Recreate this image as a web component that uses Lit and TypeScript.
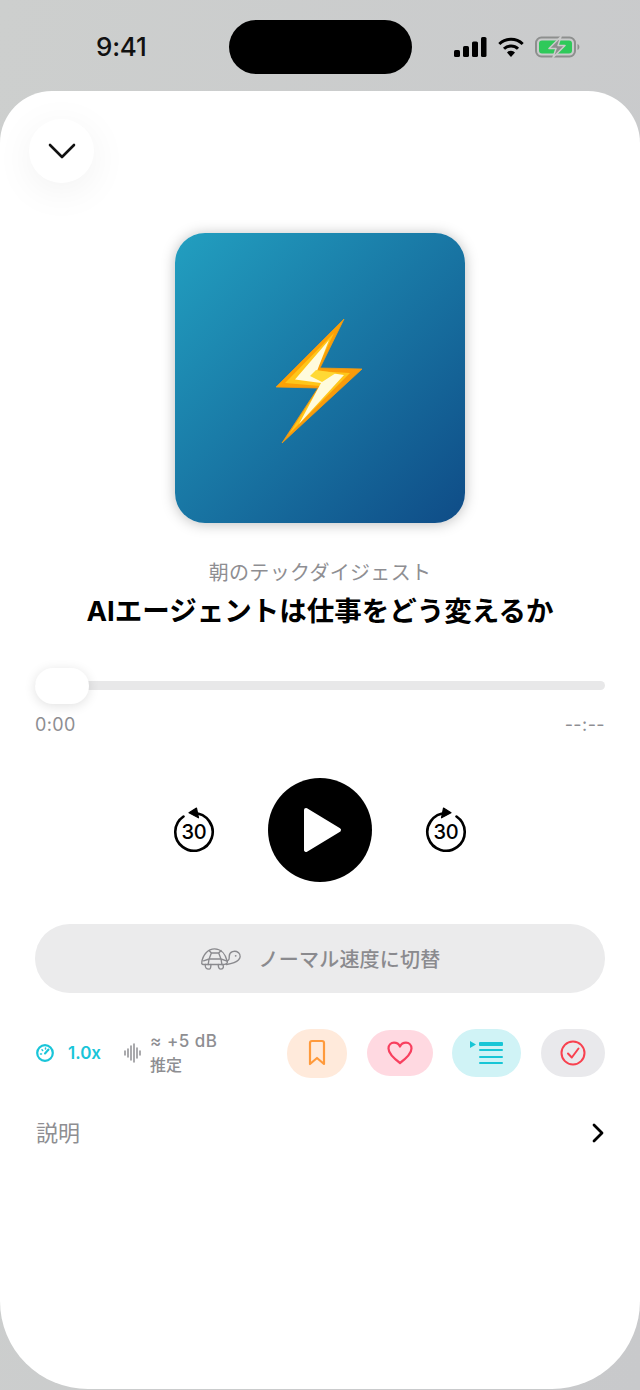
import { LitElement, html, css, svg } from "lit";
import { customElement } from "lit/decorators.js";

const replay = (flip: boolean) => html`<div class="skip">
  <svg width="42" height="46" viewBox="0 0 42 46" fill="none" class=${flip ? "flip" : ""}>
    <path d="M10.500 9.500 A 18.700 18.700 0 1 0 21 6.300" stroke="#000" stroke-width="2.600" stroke-linecap="round"/>
    <path d="M23.500 1 L16 5.800 L25.500 10.800 Z" fill="#000" stroke="#000" stroke-width="1.200" stroke-linejoin="round"/>
  </svg>
  <span>30</span>
</div>`;

@customElement("app-root")
export class AppRoot extends LitElement {
  static styles = css`
    :host { display: block; width: 640px; height: 1390px; overflow: hidden; background: linear-gradient(100deg, #cdcfce, #c8c9cb); font-family: Inter, "Noto Sans CJK JP", sans-serif; }
    .status { height: 91px; padding-top: 20px; box-sizing: border-box; display: grid; grid-template-columns: 229px 183px 1fr; }
    .time { font: 500 26px/54px Inter, sans-serif; color: #111; padding-left: 96px; letter-spacing: -0.2px; }
    .island { width: 183px; height: 54px; background: #000; border-radius: 27px; }
    .sys { display: flex; align-items: center; gap: 10px; padding-left: 41px; height: 54px; }
    .sheet { position: relative; overflow: hidden; height: 1298px; background: #fff; border-radius: 52px 52px 88px 88px; display: flex; flex-direction: column; align-items: center; }
    .close { position: absolute; left: 29px; top: 28px; width: 65px; height: 64px; border-radius: 50%; background: #fff; box-shadow: 0 8px 40px rgba(0,0,0,.06); display: flex; align-items: center; justify-content: center; }
    .art { margin-top: 142px; width: 290px; height: 290px; border-radius: 30px; background: linear-gradient(135deg, #229fc0, #0f4c87); box-shadow: 0 1px 14px rgba(0,0,0,.26); display: flex; align-items: center; justify-content: center; }
    .bolt { filter: blur(.4px); }
    .show { margin-top: 37px; font-size: 20px; line-height: 27px; color: #8e8e92; letter-spacing: 0.3px; }
    .title { margin-top: 7px; font-size: 27.500px; line-height: 34px; font-weight: 700; color: #000; }
    .progress { position: relative; margin-top: 53px; width: 570px; height: 9px; border-radius: 5px; background: #e8e8e9; }
    .thumb { position: absolute; left: 0; top: -13px; width: 54px; height: 36px; border-radius: 18px; background: #fff; box-shadow: 0 2px 12px rgba(0,0,0,.12); }
    .times { width: 570px; margin-top: 24px; display: flex; justify-content: space-between; font-size: 18px; line-height: 22px; color: #8e8e92; letter-spacing: .4px; }
    .controls { margin-top: 42px; display: flex; align-items: center; gap: 53px; }
    .skip { position: relative; width: 42px; height: 46px; }
    .skip svg { display: block; }
    .flip { transform: scaleX(-1); }
    .skip span { position: absolute; left: 0; right: 0; top: 9px; text-align: center; font-size: 20px; line-height: 32px; font-weight: 500; color: #000; letter-spacing: -0.3px; }
    .play { width: 104px; height: 104px; border-radius: 50%; background: #000; display: flex; align-items: center; justify-content: center; }
    .glyph { margin-left: 6px; }
    .normal { margin-top: 42px; width: 570px; height: 69px; border-radius: 35px; background: #ebebec; display: flex; align-items: center; justify-content: center; gap: 17px; font-size: 20px; font-weight: 500; color: #8a8a8e; letter-spacing: .2px; }
    .meta { margin-top: 35px; width: 570px; height: 50px; display: flex; align-items: center; }
    .speed { display: flex; align-items: center; gap: 13px; color: #19c5d9; font-size: 17px; font-weight: 600; width: 89px; }
    .db { display: flex; align-items: center; gap: 8px; width: 163px; color: #8e8e92; font-size: 16px; line-height: 24px; font-weight: 500; }
    .db b { font-size: 17px; font-weight: 500; letter-spacing: .5px; }
    .pills { flex: 1; display: flex; align-items: center; justify-content: space-between; }
    .pill { height: 48px; border-radius: 24px; display: flex; align-items: center; justify-content: center; }
    .orange { width: 60px; height: 49px; background: #ffeadb; }
    .pink { width: 66px; background: #ffd9e1; height: 46px; }
    .teal { width: 69px; background: #d0f3f6; }
    .grey { width: 64px; background: #e9e9ec; }
    .desc { margin-top: 39px; width: 570px; height: 32px; display: flex; align-items: center; justify-content: space-between; font-size: 22px; color: #8e8e92; }
    .desc span { margin: -4px 0 0 1px; }
  `;

  render() {
    return html`
      <div class="status">
        <div class="time">9:41</div>
        <div class="island"></div>
        <div class="sys">
          <svg width="34" height="22" viewBox="0 0 34 22" fill="#000">
            <rect x="1" y="14" width="6" height="7" rx="1.600"/><rect x="10" y="10" width="6" height="11" rx="1.600"/><rect x="19" y="5.500" width="6" height="15.500" rx="1.600"/><rect x="28" y="1" width="5.500" height="20" rx="1.600"/>
          </svg>
          <svg width="28" height="22" viewBox="0 0 27 22" fill="none" stroke="#000" stroke-width="3">
            <path d="M1.800 8 A 17 17 0 0 1 25.200 8"/><path d="M6.500 12.800 A 10 10 0 0 1 20.500 12.800"/><path d="M13.500 21 L9.500 16.500 A 5.500 5.500 0 0 1 17.500 16.500 Z" fill="#000" stroke="none"/>
          </svg>
          <svg width="46" height="22" viewBox="0 0 46 22" fill="none">
            <rect x="1" y="1.500" width="39" height="19" rx="5.500" stroke="#8d8f8e" stroke-width="2"/>
            <rect x="4" y="4.500" width="33" height="13" rx="3" fill="#2fc95a"/>
            <path d="M42.500 8 C45 9 45 13 42.500 14 Z" fill="#8d8f8e"/>
            <path d="M26 0.500 L14 12.500 H21 L18 21.500 L30 9.500 H23 Z" fill="#8d8f8e" stroke="#cbcccc" stroke-width="1.500" stroke-linejoin="round"/>
          </svg>
        </div>
      </div>
      <div class="sheet">
        <div class="close">
          <svg width="30" height="18" viewBox="0 0 30 18" fill="none"><path d="M3 3 L15 15 L27 3" stroke="#111" stroke-width="2.600" stroke-linecap="round" stroke-linejoin="round"/></svg>
        </div>
        <div class="art">
          <svg class="bolt" width="92" height="132" viewBox="0 0 92 132">
            <defs>
              <linearGradient id="b" x1="0" y1="0" x2="1" y2="1"><stop offset="0" stop-color="#ffa800"/><stop offset="1" stop-color="#f59410"/></linearGradient>
            </defs>
            <path d="M70 7 L46 56 L88 57 L8 131 L44 76 L2 75 Z" fill="url(#b)" stroke="#f59a10" stroke-width="0.800" stroke-linejoin="round"/>
            <path d="M60 21 L42 59 L76 61 L15 122 L46 74 L11 71 Z" fill="#ffc61a"/>
            <path d="M55 28 L43 59 L70 63 L25 112 L47 71 L21 67.500 Z" fill="#fffbdc"/>
            <path d="M42 58 L62 61 L48 70 L36 64 Z" fill="#ffd934"/>
          </svg>
        </div>
        <div class="show">朝のテックダイジェスト</div>
        <div class="title">AIエージェントは仕事をどう変えるか</div>
        <div class="progress"><div class="thumb"></div></div>
        <div class="times"><span>0:00</span><span>--:--</span></div>
        <div class="controls">
          ${replay(false)}
          <div class="play">
            <svg class="glyph" width="40" height="46" viewBox="0 0 40 46"><path d="M3 3 L36 23 L3 43 Z" fill="#fff" stroke="#fff" stroke-width="4" stroke-linejoin="round"/></svg>
          </div>
          ${replay(true)}
        </div>
        <div class="normal">
          <svg width="42" height="22" viewBox="0 0 44 24" fill="none" stroke="#8a8a8e" stroke-width="1.500" stroke-linejoin="round" stroke-linecap="round">
            <path d="M1 16 C2 7 8 1 15 1 C22 1 27 7 29 15 C29 18 26 18 24 18 H5 C2 18 0.500 18 1 16 Z"/>
            <path d="M9 12 L11.500 5.500 H19.500 L22 12 Z M11.500 5.500 L9 2.800 M19.500 5.500 L22 2.800 M9 12 L3 14 M22 12 L28 14 M9 12 L8 18 M22 12 L23 18"/>
            <path d="M5 18 C4 21 6 23 9 23 C11 23 11 20 11 18 M19 18 C19 21 20 23 22 23 C25 23 25 20 24 18"/>
            <path d="M28 14 C31 14 31 12 31 9 C31 4 37 2 41 5 C44 8 43 11 41 13 C38 16 33 17 28 18"/>
            <circle cx="38" cy="8.500" r="1" fill="#8a8a8e" stroke="none"/>
          </svg>
          <span>ノーマル速度に切替</span>
        </div>
        <div class="meta">
          <div class="speed">
            <svg width="20" height="20" viewBox="0 0 20 20" fill="none" stroke="#19c5d9">
              <circle cx="10" cy="10" r="7.800" stroke-width="2.200"/>
              <path d="M10 10.500 L13.500 6.500" stroke-width="2" stroke-linecap="round"/>
              <path d="M5.500 11 H6.500 M7 6.800 L7.700 7.500 M10.500 5 V6" stroke-width="1.500" stroke-linecap="round"/>
            </svg>
            <span>1.0x</span>
          </div>
          <div class="db">
            <svg width="18" height="20" viewBox="0 0 18 20" stroke="#8e8e92" stroke-width="1.500" stroke-linecap="round">
              ${[[1, 8, 12], [4, 6, 14], [7, 3, 17], [10, 1, 19], [13, 5, 15], [16, 8, 12]].map(([x, a, b]) => svg`<path d="M${x} ${a} V${b}"/>`)}
            </svg>
            <div><b>≈ +5 dB</b><br />推定</div>
          </div>
          <div class="pills">
            <div class="pill orange">
              <svg width="18" height="28" viewBox="0 0 18 28" fill="none"><path d="M2 4 Q2 2 4 2 H14 Q16 2 16 4 V25 L9 19 L2 25 Z" stroke="#ff9a3c" stroke-width="2.200" stroke-linejoin="round"/></svg>
            </div>
            <div class="pill pink">
              <svg width="26" height="24" viewBox="0 0 26 24" fill="none"><path d="M13 22 C5 16 1.500 12 1.500 7.500 C1.500 4 4 1.700 7 1.700 C9.500 1.700 11.800 3 13 5.500 C14.200 3 16.500 1.700 19 1.700 C22 1.700 24.500 4 24.500 7.500 C24.500 12 21 16 13 22 Z" stroke="#f8405f" stroke-width="2.200" stroke-linejoin="round"/></svg>
            </div>
            <div class="pill teal">
              <svg width="34" height="24" viewBox="0 0 34 24" fill="#18c6d6">
                <path d="M0 0 L6 3.500 L0 7 Z"/><rect x="9" y="1" width="24" height="4" rx="1"/><rect x="9" y="8" width="24" height="2" rx="1"/><rect x="9" y="15" width="24" height="2" rx="1"/><rect x="9" y="21" width="24" height="2" rx="1"/>
              </svg>
            </div>
            <div class="pill grey">
              <svg width="26" height="26" viewBox="0 0 26 26" fill="none" stroke="#f8414f"><circle cx="13" cy="13" r="11.500" stroke-width="2"/><path d="M8 13.500 L11.800 17.500 L18.500 8.500" stroke-width="2" stroke-linecap="round" stroke-linejoin="round"/></svg>
            </div>
          </div>
        </div>
        <div class="desc">
          <span>説明</span>
          <svg width="14" height="20" viewBox="0 0 14 20" fill="none"><path d="M3 2 L11 10 L3 18" stroke="#000" stroke-width="2.800" stroke-linecap="round" stroke-linejoin="round"/></svg>
        </div>
      </div>
    `;
  }
}
